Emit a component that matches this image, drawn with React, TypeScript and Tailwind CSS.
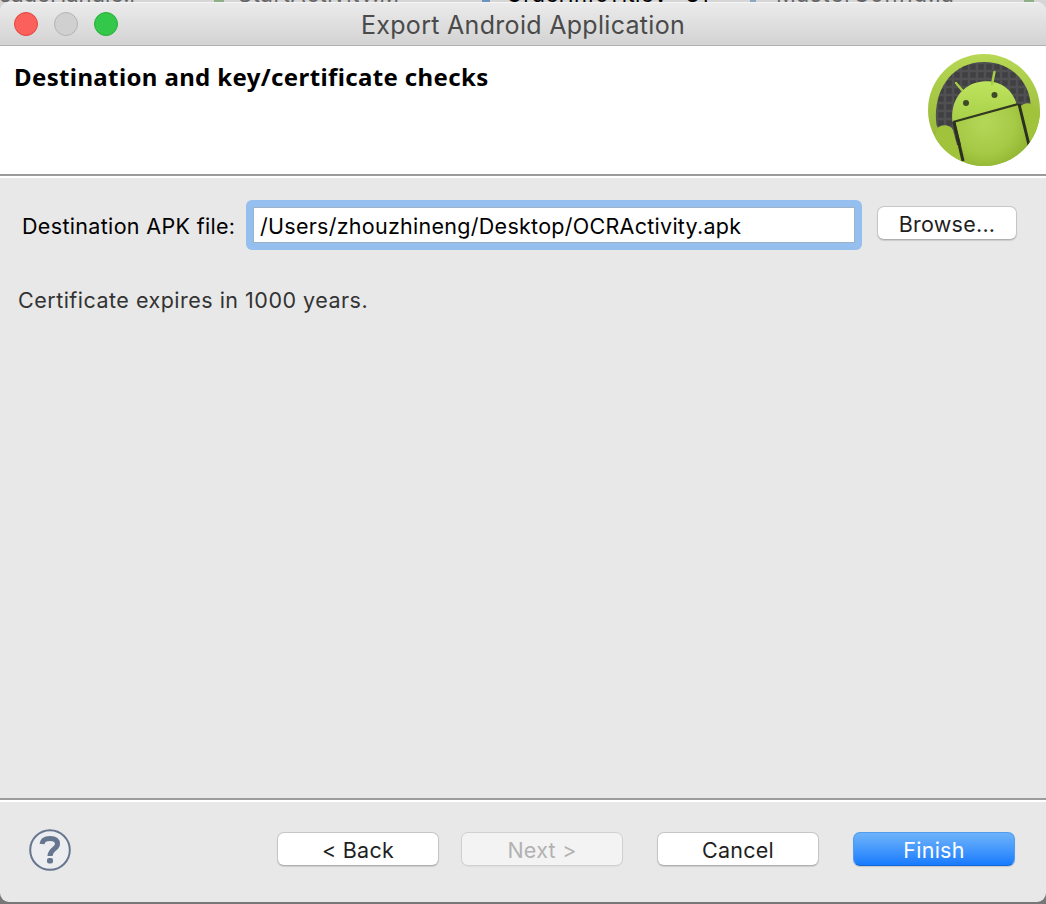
import React from "react";

function AndroidLogo() {
  return (
    <svg width="114" height="114" viewBox="0 0 114 114" aria-hidden="true">
      <defs>
        <linearGradient id="ring" x1="0" y1="0" x2="0" y2="1">
          <stop offset="0" stopColor="#b6d854" />
          <stop offset="1" stopColor="#8fae2f" />
        </linearGradient>
        <radialGradient id="body" gradientUnits="userSpaceOnUse" cx="58" cy="70" r="54">
          <stop offset="0" stopColor="#b4d758" />
          <stop offset="0.55" stopColor="#a6ca46" />
          <stop offset="1" stopColor="#8aad2b" />
        </radialGradient>
        <linearGradient id="head" x1="0" y1="0" x2="0" y2="1">
          <stop offset="0" stopColor="#bde45c" />
          <stop offset="1" stopColor="#a8cf48" />
        </linearGradient>
        <pattern id="mesh" width="8" height="8" patternUnits="userSpaceOnUse">
          <rect width="8" height="8" fill="#404042" />
          <path d="M0 2H8M2 0V8" stroke="#5a5a5d" strokeOpacity="0.6" strokeWidth="2.5" />
        </pattern>
        <clipPath id="disc"><circle cx="57" cy="57" r="56" /></clipPath>
      </defs>
      <circle cx="57" cy="57" r="56" fill="url(#ring)" />
      <g clipPath="url(#disc)">
        <path d="M9.500 72C5 39 24 9 57 9C83 9 101 27 103.500 50L100 92H18Z" fill="url(#mesh)" />
        <path d="M25.500 69C23 48 35 33 50 29.500C69 25 85 34 90 52Z" fill="url(#head)" />
        <path d="M28 69L91 51L109 114H40Z" fill="url(#body)" />
        <path d="M10 76C13 71 23 71 26 77L36 114H0Z" fill="#a0c33b" />
        <path d="M93 54C97 49 104 49 108 54L114 60V110L103 94Z" fill="#a0c33b" />
        <path d="M26 69L91 51" fill="none" stroke="#333821" strokeWidth="2.200" />
        <path d="M27 69L36 108M92 51L102 92" fill="none" stroke="#2c3020" strokeWidth="3" />
        <path d="M29 30L35 37M67.500 19L65 31" stroke="#a9cf45" strokeWidth="2.400" strokeLinecap="round" />
        <circle cx="39" cy="50" r="3" fill="#3f4828" />
        <circle cx="67.500" cy="42" r="3" fill="#3f4828" />
      </g>
    </svg>
  );
}

function HelpIcon() {
  return (
    <svg width="44" height="44" viewBox="0 0 44 44" aria-hidden="true">
      <circle cx="22" cy="22" r="19.800" fill="#ecedf0" stroke="#66768f" strokeWidth="2" />
      <path d="M14 16C14.500 11.500 18 10.500 22 10.500C27 10.500 29.500 12.500 29.500 16C29.500 21 22 21 22 28" fill="none" stroke="#66768f" strokeWidth="5" />
      <rect x="19" y="30" width="6" height="5.500" rx="2" fill="#66768f" />
    </svg>
  );
}

const buttonBase =
  "flex h-[34px] items-center justify-center rounded-[7px] border pt-[3px] text-[21.5px] leading-none tracking-[0.25px]";
const normal = "border-[#c6c6c6] border-b-[#b0b0b0] bg-white text-[#1f1f1f] shadow-[0_1px_1px_rgba(0,0,0,0.12)]";
const disabled = "border-[#d0d0d0] bg-[#f3f3f3] text-[#b2b2b2] shadow-[0_1px_1px_rgba(0,0,0,0.04)]";
const primary =
  "border-[#4f9cf0] border-b-[#1668da] bg-linear-to-b from-[#6db3f9] to-[#147bff] text-white shadow-[0_1px_1px_rgba(0,0,0,0.15)]";

export default function App() {
  return (
    <div className="flex h-[904px] w-[1046px] flex-col overflow-hidden bg-[#777] font-['Inter',sans-serif]">
      <div className="h-[12px] shrink-0 overflow-hidden bg-[#d6d6d6]">
        <div className="-mt-[19px] flex text-[22px] leading-[26px] whitespace-nowrap text-[#666]">
          <span className="-ml-[12px] w-[226px]">ssageHandle.j</span>
          <span className="mt-[10px] mr-[14px] h-[11px] w-[10px] bg-[#8fae86]" />
          <span className="w-[244px] tracking-[0.6px]">StartActivity.M</span>
          <span className="mt-[10px] mr-[16px] h-[11px] w-[8px] bg-[#6e93bf]" />
          <span className="w-[244px] tracking-[0.4px] text-black">OrderInfoTitleV &quot;81</span>
          <span className="mt-[10px] mr-[20px] h-[11px] w-[6px] bg-[#8aa5c6]" />
          <span className="w-[248px] tracking-[0.9px]">MasterConfig.ja</span>
          <span className="mt-[10px] h-[11px] w-[10px] bg-[#8fae86]" />
        </div>
      </div>
      <div className="-mt-[10px] flex min-h-0 flex-1 flex-col overflow-hidden rounded-[9px] bg-[#e8e8e8]">
        <header className="grid h-[44px] shrink-0 grid-cols-[120px_1fr_120px] items-center border-t border-b border-t-[#f5f5f5] border-b-[#b1b1b1] bg-linear-to-b from-[#ebebeb] to-[#d3d3d3]">
          <div className="flex gap-4 pl-[14px]">
            <span className="size-6 rounded-full border border-[#e2463f] bg-[#fc605b]" />
            <span className="size-6 rounded-full border border-[#b4b4b4] bg-[#d0d0d0]" />
            <span className="size-6 rounded-full border border-[#28ae38] bg-[#34c84a]" />
          </div>
          <h1 className="pt-[2px] text-center text-[25px] leading-none tracking-[0.3px] whitespace-nowrap text-[#4a4a4a]">Export Android Application</h1>
        </header>
        <section className="flex h-[128px] shrink-0 justify-between bg-white pt-[7px] pr-[5px] pl-[14px]">
          <h2 className="pt-[8px] font-['Noto_Sans',sans-serif] text-[24px] leading-[32px] font-bold tracking-[0.37px] text-black">Destination and key/certificate checks</h2>
          <AndroidLogo />
        </section>
        <div className="h-[4px] shrink-0 border-t-2 border-b-2 border-t-[#9b9b9b] border-b-white" />
        <main className="flex flex-1 flex-col">
          <div className="flex items-start pt-[22px] pl-[22px] text-[21.5px] leading-[50px] text-black">
            <label className="w-[224px] pt-px tracking-[0.33px] whitespace-nowrap">Destination APK file:</label>
            <div className="w-[616px] rounded-[6px] bg-[#94bfee] p-[7px]">
              <div className="h-[36px] border border-[#9db1c8] bg-white pl-[6px] leading-[37px] tracking-[0.27px] whitespace-nowrap">/Users/zhouzhineng/Desktop/OCRActivity.apk</div>
            </div>
            <button className={`${buttonBase} ${normal} mt-[6px] ml-[15px] w-[140px]`}>Browse...</button>
          </div>
          <p className="mt-[33px] pl-[18px] text-[21.5px] leading-[32px] tracking-[0.49px] text-[#333]">Certificate expires in 1000 years.</p>
        </main>
        <footer className="flex h-[104px] shrink-0 flex-col border-t-2 border-t-[#9b9b9b]">
          <div className="h-[2px] shrink-0 bg-white" />
          <div className="flex pt-[30px] pl-[28px]">
            <div className="-mt-1 w-[249px]"><HelpIcon /></div>
            <button className={`${buttonBase} ${normal} w-[162px]`}>&lt; Back</button>
            <button className={`${buttonBase} ${disabled} ml-[22px] w-[162px]`}>Next &gt;</button>
            <button className={`${buttonBase} ${normal} ml-[34px] w-[162px]`}>Cancel</button>
            <button className={`${buttonBase} ${primary} ml-[34px] w-[162px]`}>Finish</button>
          </div>
        </footer>
      </div>
      <div className="h-[2px] shrink-0 bg-[#777]" />
    </div>
  );
}
